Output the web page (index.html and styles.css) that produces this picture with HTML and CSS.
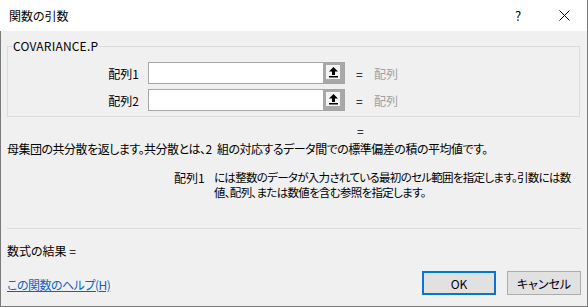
FILE: index.html
```html
<!DOCTYPE html>
<html lang="ja">
<head>
  <meta charset="UTF-8">
  <title>関数の引数</title>
  <link rel="stylesheet" href="styles.css">
</head>
<body>

  <div class="window">
    <div class="titlebar">
      <span class="title">関数の引数</span>
      <span class="caption-btn help">?</span>
      <span class="caption-btn close">
        <svg width="11" height="11" viewBox="0 0 11 11">
          <path d="M0.5 0.5 L10.5 10.5 M10.5 0.5 L0.5 10.5" stroke="#000" stroke-width="1" fill="none"/>
        </svg>
      </span>
    </div>

    <div class="content">
      <fieldset class="group">
        <legend>COVARIANCE.P</legend>

        <div class="arg-row">
          <label class="arg-label" for="array1">配列1</label>
          <div class="ref-box">
            <input type="text" id="array1">
            <span class="ref-btn">
              <svg width="9" height="11" viewBox="0 0 9 11">
                <path d="M4.5 0 L0 4.5 L3 4.5 L3 8 L6 8 L6 4.5 L9 4.5 Z" fill="#000"/>
                <rect x="0" y="9" width="9" height="1.5" fill="#000"/>
              </svg>
            </span>
          </div>
          <span class="eq">=</span>
          <span class="arg-value">配列</span>
        </div>

        <div class="arg-row">
          <label class="arg-label" for="array2">配列2</label>
          <div class="ref-box">
            <input type="text" id="array2">
            <span class="ref-btn">
              <svg width="9" height="11" viewBox="0 0 9 11">
                <path d="M4.5 0 L0 4.5 L3 4.5 L3 8 L6 8 L6 4.5 L9 4.5 Z" fill="#000"/>
                <rect x="0" y="9" width="9" height="1.5" fill="#000"/>
              </svg>
            </span>
          </div>
          <span class="eq">=</span>
          <span class="arg-value">配列</span>
        </div>
      </fieldset>

      <div class="func-result">=</div>

      <p class="desc">母集団の共分散を返します。共分散とは、2 組の対応するデータ間での標準偏差の積の平均値です。</p>

      <div class="arg-help">
        <span class="arg-help-name">配列1</span>
        <span class="arg-help-text">には整数のデータが入力されている最初のセル範囲を指定します。引数には数値、配列、または数値を含む参照を指定します。</span>
      </div>

      <hr class="sep">

      <div class="formula-result">数式の結果 =</div>

      <div class="footer">
        <a href="#" class="help-link">この関数のヘルプ(H)</a>
        <div class="buttons">
          <button class="btn default">OK</button>
          <button class="btn">キャンセル</button>
        </div>
      </div>
    </div>
  </div>

</body>
</html>
```

FILE: styles.css
```css
body {
  margin: 0;
  font-family: "Noto Sans CJK JP", "Noto Sans", sans-serif;
  font-size: 12px;
  font-feature-settings: "palt";
  color: #000;
  background: #f0f0f0;
  overflow: hidden;
}

.window {
  width: 588px;
  height: 307px;
  display: flex;
  flex-direction: column;
  box-sizing: border-box;
  border-right: 1px solid #7a7a7a;
}

.titlebar {
  height: 31px;
  background: #fff;
  display: flex;
  align-items: center;
  padding-left: 9px;
}

.title {
  flex: 1;
  line-height: 16px;
}

.caption-btn {
  width: 46px;
  height: 31px;
  display: flex;
  align-items: center;
  justify-content: center;
}

.help {
  font-size: 13px;
}

.content {
  flex: 1;
  background: #f0f0f0;
  border-left: 1px solid #7a7a7a;
  border-bottom: 1px solid #7a7a7a;
  padding: 0 6px 0 6px;
  display: flex;
  flex-direction: column;
}

.group {
  margin: 7px 1px 0 0;
  padding: 8px 0 5px 0;
  border: 1px solid #dcdcdc;
  display: flex;
  flex-direction: column;
  gap: 5px;
}

.group legend {
  padding: 0 1px;
  margin-left: 4px;
  line-height: 16px;
  letter-spacing: 0.2px;
}

.arg-row {
  display: flex;
  align-items: center;
  height: 22px;
}

.arg-label {
  width: 131px;
  text-align: right;
  margin-right: 9px;
}

.ref-box {
  width: 197px;
  height: 22px;
  box-sizing: border-box;
  border: 1px solid #a5a5a5;
  background: #fff;
  display: flex;
}

.ref-box input {
  flex: 1;
  min-width: 0;
  border: none;
  outline: none;
  padding: 0 3px;
  font: inherit;
}

.ref-btn {
  width: 21px;
  box-sizing: border-box;
  background: #f4f4f4;
  border-style: solid;
  border-color: #a8a8a8;
  border-width: 2px 4px 4px 3px;
  display: flex;
  align-items: center;
  justify-content: center;
}

.eq {
  margin-left: 11px;
  width: 18px;
}

.arg-value {
  color: #a0a0a0;
}

.func-result {
  margin-top: 6px;
  padding-left: 350px;
  line-height: 16px;
}

.desc {
  margin: 2px 0 0 0;
  line-height: 16px;
  letter-spacing: -0.5px;
  word-spacing: 3px;
}

.arg-help {
  margin-top: 13px;
  display: flex;
  line-height: 15px;
}

.arg-help-name {
  flex-shrink: 0;
  width: 207px;
  padding-left: 167px;
  box-sizing: border-box;
}

.arg-help-text {
  flex: 1;
  font-size: 11.5px;
  letter-spacing: -0.7px;
}

.sep {
  margin: 28px 0 0 0;
  border: none;
  border-top: 1px solid #dcdcdc;
  height: 0;
}

.formula-result {
  margin-top: 14px;
  line-height: 16px;
}

.footer {
  margin-top: 12px;
  display: flex;
  align-items: flex-end;
  justify-content: space-between;
}

.help-link {
  color: #0a64c8;
  line-height: 16px;
  margin-bottom: 2px;
  letter-spacing: -0.5px;
}

.buttons {
  display: flex;
  gap: 11px;
}

.btn {
  width: 74px;
  height: 24px;
  box-sizing: border-box;
  background: #e1e1e1;
  border: 1px solid #adadad;
  font: inherit;
  color: #000;
  padding: 0;
}

.btn.default {
  border: 2px solid #0078d7;
}
```
